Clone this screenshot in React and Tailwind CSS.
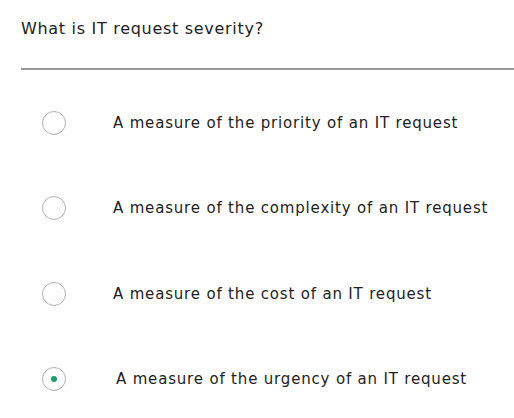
export default function App() {
  const options = [
    { text: "A measure of the priority of an IT request", checked: false },
    { text: "A measure of the complexity of an IT request", checked: false },
    { text: "A measure of the cost of an IT request", checked: false },
    { text: "A measure of the urgency of an IT request", checked: true },
  ];
  return (
    <div className="w-[514px] h-[418px] bg-white pl-[21px] text-[#222]" style={{ fontFamily: '"DejaVu Sans", sans-serif' }}>
      <div className="pt-[18px] h-[68px] text-[16px] leading-[22px] tracking-[0.7px]">What is IT request severity?</div>
      <div className="h-[2px] bg-[#9a9a9a]" />
      <div className="flex flex-col pt-[10px]">
        {options.map((o, i) => (
          <div key={i} className="flex items-center h-[85.5px]">
            <div className="ml-[21px] w-[24px] h-[24px] rounded-full border border-[#b0b0b0] flex items-center justify-center shrink-0">
              {o.checked && <div className="w-[6px] h-[6px] rounded-full bg-[#1f9a6b]" />}
            </div>
            <div className={(o.checked ? "ml-[50px]" : "ml-[47px]") + " text-[15px] tracking-[0.82px]"}>{o.text}</div>
          </div>
        ))}
      </div>
    </div>
  );
}
